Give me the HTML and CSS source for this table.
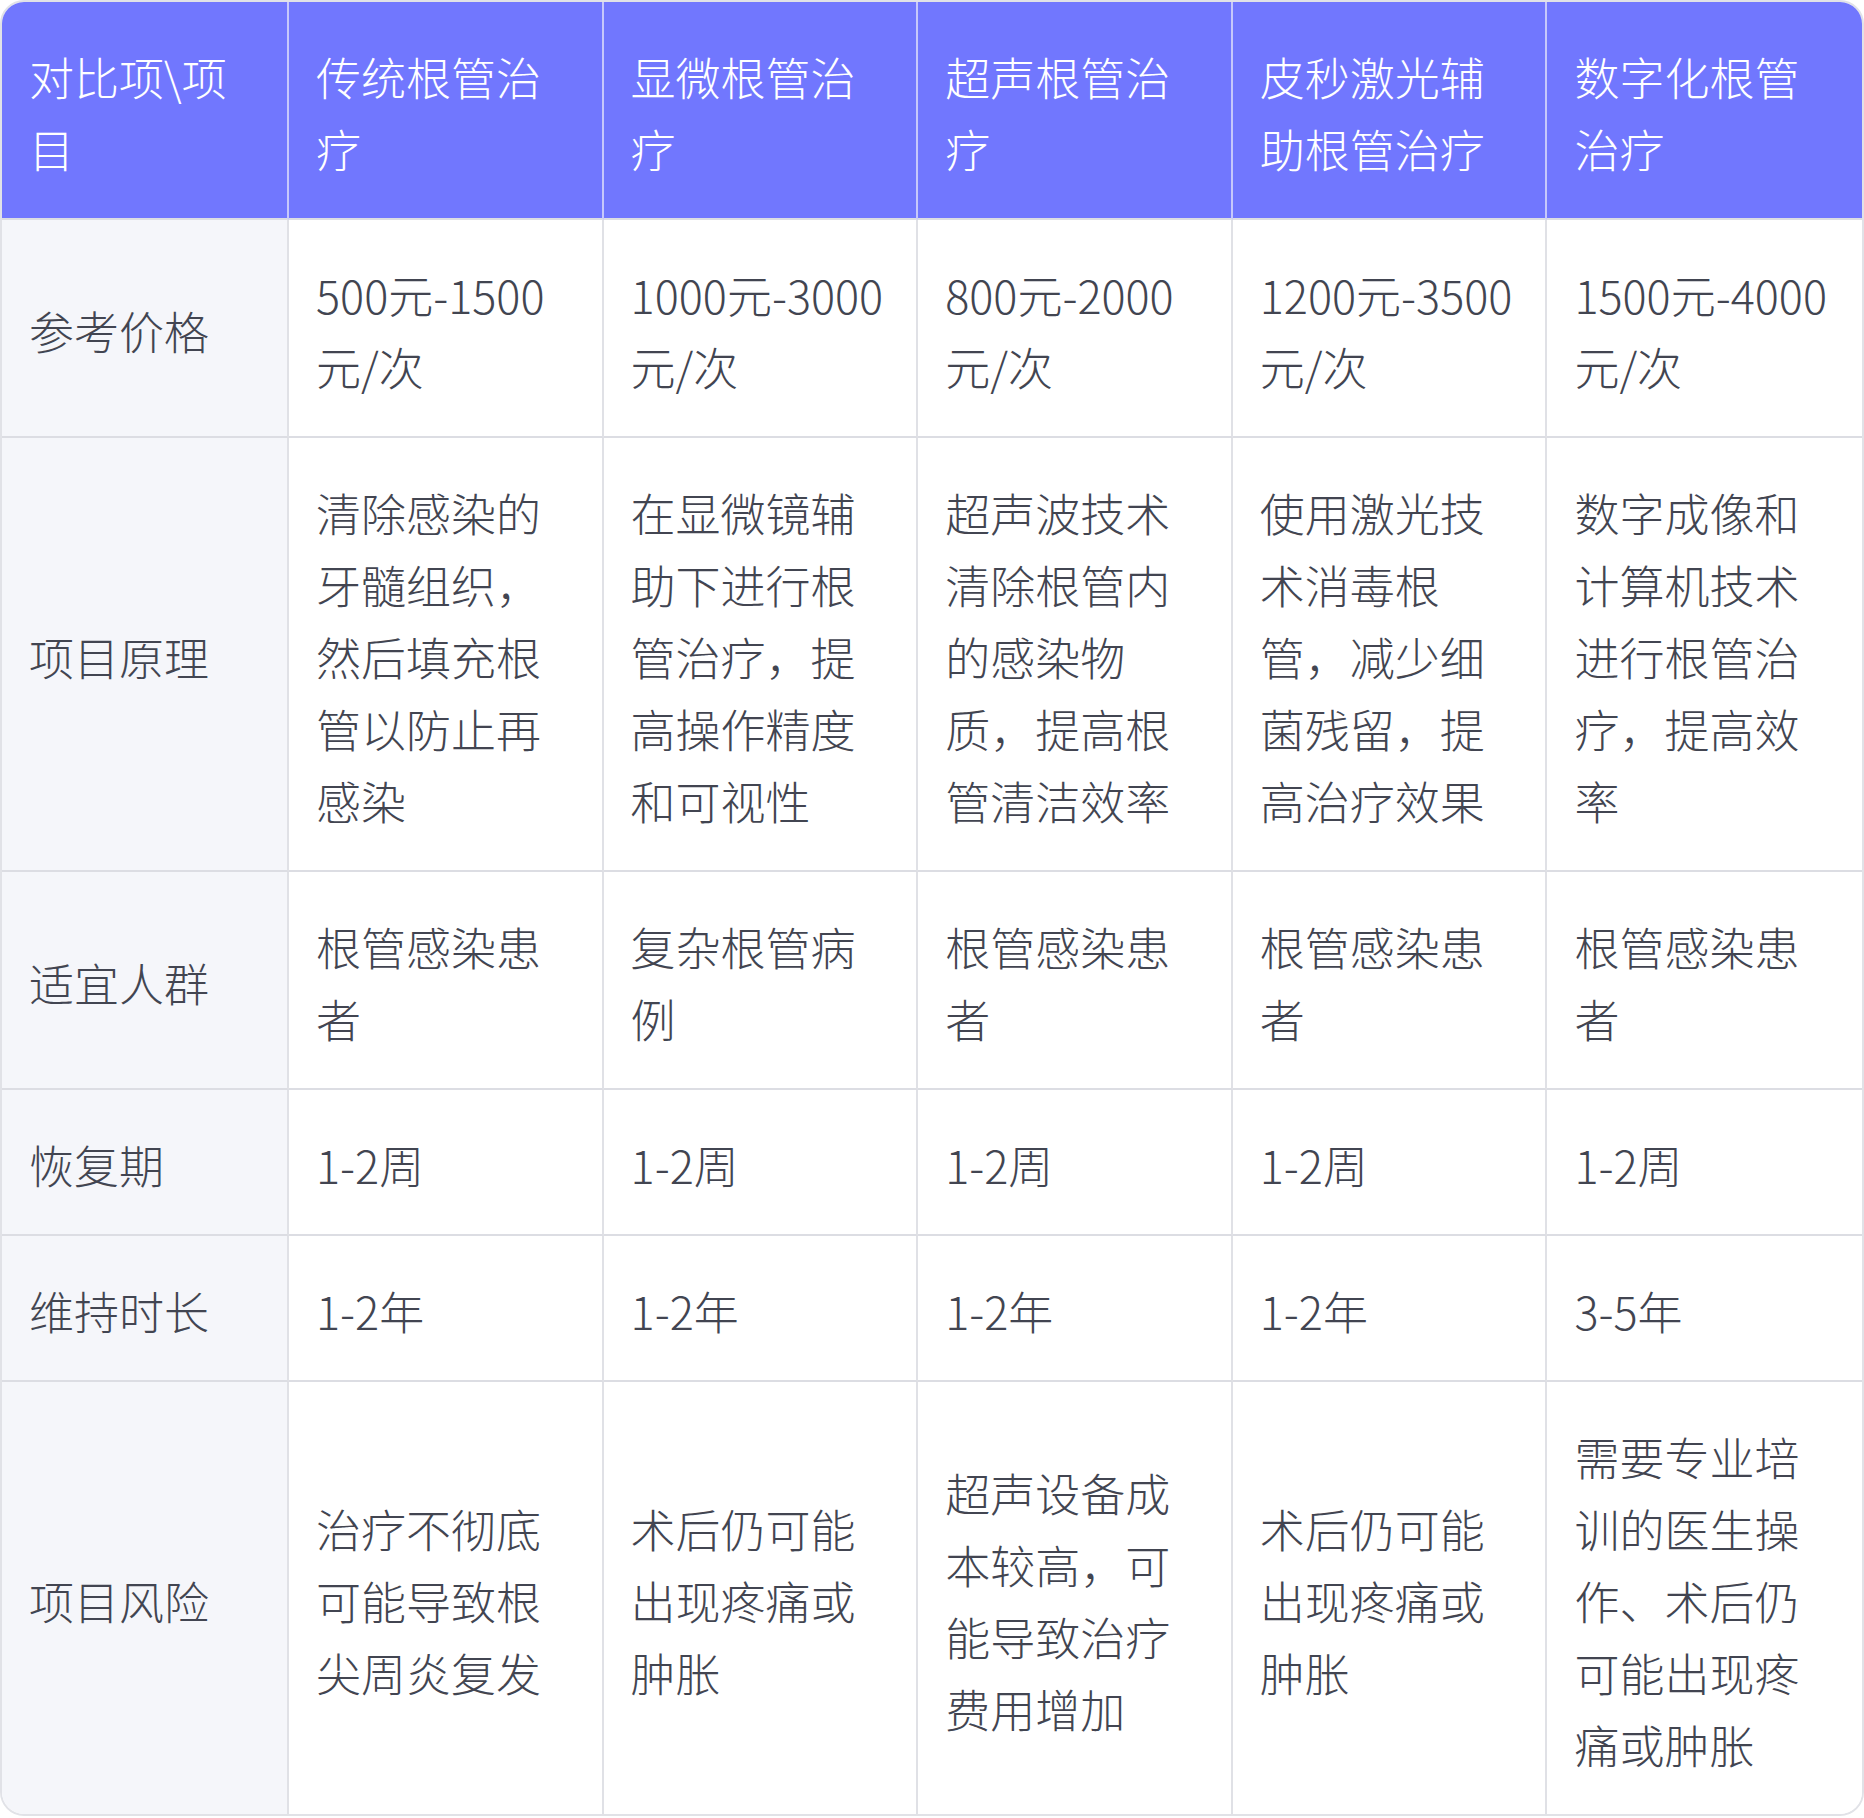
FILE: index.html
```html
<!DOCTYPE html>
<html lang="zh-CN">
<head>
<meta charset="utf-8">
<title>根管治疗对比</title>
<link rel="stylesheet" href="styles.css">
</head>
<body>
<div class="wrap">
<table class="cmp">
<colgroup><col class="c-first"><col><col><col><col><col></colgroup>
<thead>
<tr>
<th>对比项\项目</th>
<th>传统根管治疗</th>
<th>显微根管治疗</th>
<th>超声根管治疗</th>
<th>皮秒激光辅助根管治疗</th>
<th>数字化根管治疗</th>
</tr>
</thead>
<tbody>
<tr>
<td class="label">参考价格</td>
<td>500元-1500元/次</td>
<td>1000元-3000元/次</td>
<td>800元-2000元/次</td>
<td>1200元-3500元/次</td>
<td>1500元-4000元/次</td>
</tr>
<tr>
<td class="label">项目原理</td>
<td>清除感染的牙髓组织，然后填充根管以防止再感染</td>
<td>在显微镜辅助下进行根管治疗，提高操作精度和可视性</td>
<td>超声波技术清除根管内的感染物质，提高根管清洁效率</td>
<td>使用激光技术消毒根管，减少细菌残留，提高治疗效果</td>
<td>数字成像和计算机技术进行根管治疗，提高效率</td>
</tr>
<tr>
<td class="label">适宜人群</td>
<td>根管感染患者</td>
<td>复杂根管病例</td>
<td>根管感染患者</td>
<td>根管感染患者</td>
<td>根管感染患者</td>
</tr>
<tr>
<td class="label">恢复期</td>
<td>1-2周</td>
<td>1-2周</td>
<td>1-2周</td>
<td>1-2周</td>
<td>1-2周</td>
</tr>
<tr>
<td class="label">维持时长</td>
<td>1-2年</td>
<td>1-2年</td>
<td>1-2年</td>
<td>1-2年</td>
<td>3-5年</td>
</tr>
<tr class="last">
<td class="label">项目风险</td>
<td>治疗不彻底可能导致根尖周炎复发</td>
<td>术后仍可能出现疼痛或肿胀</td>
<td>超声设备成本较高，可能导致治疗费用增加</td>
<td>术后仍可能出现疼痛或肿胀</td>
<td>需要专业培训的医生操作、术后仍可能出现疼痛或肿胀</td>
</tr>
</tbody>
</table>
</div>
</body>
</html>
```
FILE: styles.css
```css
html, body {
  margin: 0;
  padding: 0;
  background: #ffffff;
}
body {
  font-family: "Noto Sans CJK SC", "Noto Sans", sans-serif;
  font-weight: 300;
}
.wrap {
  width: 1864px;
  box-sizing: border-box;
  border: 2px solid #e1e2e7;
  border-radius: 24px;
  overflow: hidden;
}
.cmp {
  width: 100%;
  table-layout: fixed;
  border-collapse: separate;
  border-spacing: 0;
}
.c-first {
  width: 287px;
}
.cmp th,
.cmp td {
  padding: 39px 27px 33px;
  font-size: 45px;
  line-height: 72px;
  text-align: left;
  vertical-align: middle;
  border-right: 2px solid #e0e1e6;
  border-bottom: 2px solid #dcdde3;
  word-break: break-all;
}
.cmp th:last-child,
.cmp td:last-child {
  border-right: none;
}
.cmp th {
  background: #7177fe;
  color: #ffffff;
  font-weight: 300;
  border-right-color: #c6c8fb;
}
.cmp td {
  color: #424551;
  background: #ffffff;
}
.cmp td.label {
  background: #f5f6fa;
}
.cmp tr.last td {
  border-bottom: none;
}
```
